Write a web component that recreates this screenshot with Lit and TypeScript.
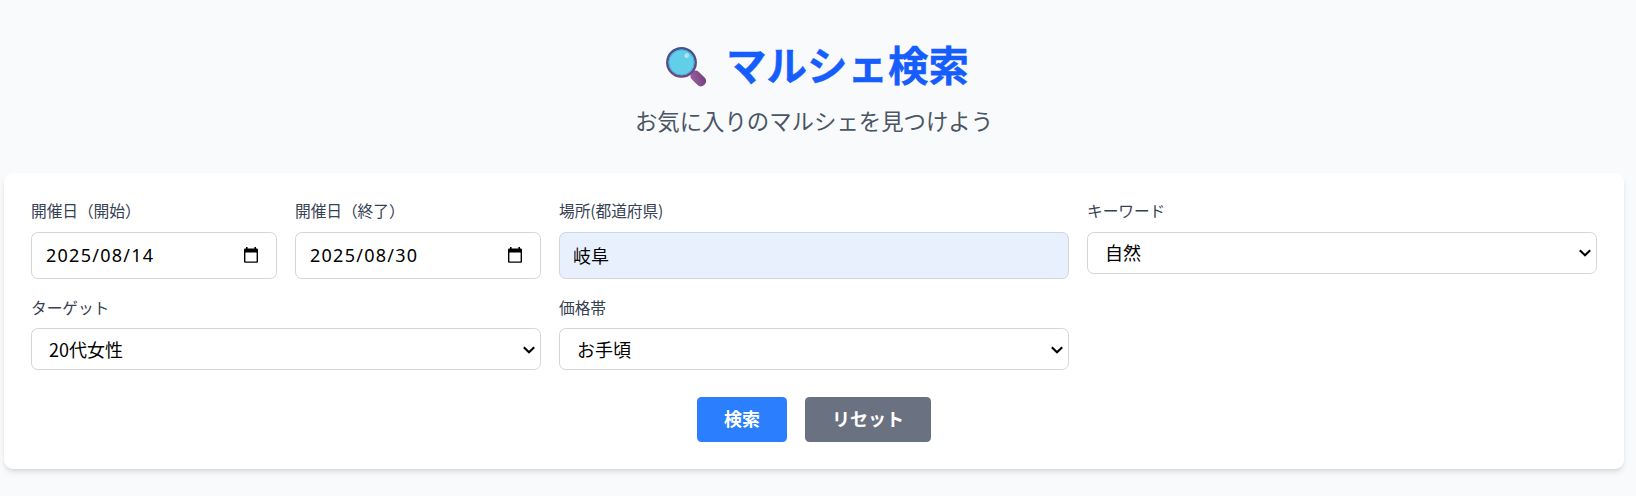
import { LitElement, html, css } from "lit";
import { customElement, property } from "lit/decorators.js";

@customElement("search-field")
class SearchField extends LitElement {
  @property() label = "";
  @property() value = "";
  @property() kind = "text";

  static styles = css`
    :host { display: block; min-width: 0; }
    .label { font-size: 15.75px; line-height: 22.5px; color: #364153; margin-bottom: 9px; white-space: nowrap; letter-spacing: -0.1px; }
    .box {
      box-sizing: border-box; display: flex; align-items: center; justify-content: space-between;
      border: 1px solid #d1d5dc; border-radius: 6.75px; background: #fff;
      font-size: 18px; line-height: 27px; color: #000; white-space: nowrap;
    }
    .text, .date { height: 47px; padding: 0 13px; }
    .text { background: #e8f0fe; }
    .date { padding: 0 18px 0 14px; font-family: "Noto Sans", sans-serif; letter-spacing: 1.25px; }
    .select { height: 42px; padding: 0 5px 0 17px; }
    svg { display: block; flex: none; }
    .calendar { margin-top: -1px; }
    .arrow { margin-top: 1px; }
  `;

  render() {
    return html`
      <div class="label">${this.label}</div>
      <div class="box ${this.kind}">
        <span>${this.value}</span>
        ${this.kind === "date"
          ? html`<svg class="calendar" width="14" height="16" viewBox="0 0 14 16">
              <path fill="#000" fill-rule="evenodd" d="M2 0h1.600v1.600h6.800V0H12v1.600h.9A1.100 1.100 0 0 1 14 2.700v12a1.100 1.100 0 0 1-1.100 1.100H1.100A1.100 1.100 0 0 1 0 14.700v-12a1.100 1.100 0 0 1 1.100-1.100H2zM1.400 5.500v8.900h11.200V5.500z" />
            </svg>`
          : ""}
        ${this.kind === "select"
          ? html`<svg class="arrow" width="13.500" height="10" viewBox="0 0 13.500 10">
              <path d="M1.800 2.200 7 7.200l5.200-5" fill="none" stroke="#000" stroke-width="2.100" />
            </svg>`
          : ""}
      </div>
    `;
  }
}

@customElement("app-root")
class AppRoot extends LitElement {
  static styles = css`
    :host {
      display: block; box-sizing: border-box; height: 496px; overflow: hidden; background: #f9fafb;
      padding: 36px 12px 0 4px; font-family: "Noto Sans CJK JP", sans-serif; font-size: 18px;
    }
    .header { height: 137px; text-align: center; }
    .title {
      display: flex; justify-content: center; align-items: center; height: 60px; margin: 0;
      font-size: 40.5px; line-height: 60px; font-weight: 700; color: #155dfc;
    }
    .title svg { margin: 0 20px 0 7px; flex: none; }
    .title span { padding-bottom: 4px; -webkit-text-stroke: 0.4px #155dfc; }
    .subtitle { margin: 8px 0 0; font-size: 22.4px; line-height: 33px; color: #4a5565; }
    .card {
      box-sizing: border-box; height: 296px; padding: 27px; background: #fff; border-radius: 9px;
      box-shadow: 0 4px 6px -1px rgba(0, 0, 0, 0.1), 0 2px 4px -2px rgba(0, 0, 0, 0.1);
    }
    .grid { display: grid; grid-template-columns: repeat(3, 1fr); gap: 18px; }
    .dates { display: grid; grid-template-columns: 1fr 1fr; gap: 18px; }
    .actions { display: flex; justify-content: center; gap: 18px; margin-top: 27px; }
    .btn {
      height: 45px; padding: 0 27px 2px; border: 0; border-radius: 4.5px; color: #fff;
      font: 700 18px/27px "Noto Sans CJK JP", sans-serif;
    }
    .primary { background: #2b7fff; }
    .secondary { background: #6a7282; }
  `;

  render() {
    return html`
      <header class="header">
        <h1 class="title">
          <svg width="40" height="41" viewBox="0 0 40 41">
            <defs>
              <linearGradient id="rim" x1="0" y1="0" x2="0" y2="1">
                <stop offset="0" stop-color="#45538f" /><stop offset="1" stop-color="#74457f" />
              </linearGradient>
              <linearGradient id="handle" x1="0" y1="1" x2="1" y2="0">
                <stop offset="0" stop-color="#9c619f" /><stop offset=".5" stop-color="#89508f" /><stop offset="1" stop-color="#6d3b78" />
              </linearGradient>
              <linearGradient id="shine" x1="0" y1="1" x2="1" y2="0">
                <stop offset="0" stop-color="#d0eefa" /><stop offset="1" stop-color="#8fd5ef" />
              </linearGradient>
            </defs>
            <path d="M25 25l4 4" stroke="#633b73" stroke-width="4" />
            <rect x="23.500" y="27.400" width="17.500" height="10.200" rx="4.600" transform="rotate(45 32.250 32.500)" fill="url(#handle)" />
            <circle cx="15.500" cy="16.400" r="14.200" fill="#62cfea" stroke="url(#rim)" stroke-width="2.500" />
            <circle cx="15.500" cy="16.400" r="12.500" fill="none" stroke="#47b3dc" stroke-width="1" />
            <ellipse cx="21" cy="9.500" rx="2.200" ry="2.600" transform="rotate(25 21 9.500)" fill="url(#shine)" />
          </svg>
          <span>マルシェ検索</span>
        </h1>
        <p class="subtitle">お気に入りのマルシェを見つけよう</p>
      </header>
      <section class="card">
        <div class="grid">
          <div class="dates">
            <search-field kind="date" label="開催日（開始）" value="2025/08/14"></search-field>
            <search-field kind="date" label="開催日（終了）" value="2025/08/30"></search-field>
          </div>
          <search-field kind="text" label="場所(都道府県)" value="岐阜"></search-field>
          <search-field kind="select" label="キーワード" value="自然"></search-field>
          <search-field kind="select" label="ターゲット" value="20代女性"></search-field>
          <search-field kind="select" label="価格帯" value="お手頃"></search-field>
        </div>
        <div class="actions">
          <button class="btn primary">検索</button>
          <button class="btn secondary">リセット</button>
        </div>
      </section>
    `;
  }
}
